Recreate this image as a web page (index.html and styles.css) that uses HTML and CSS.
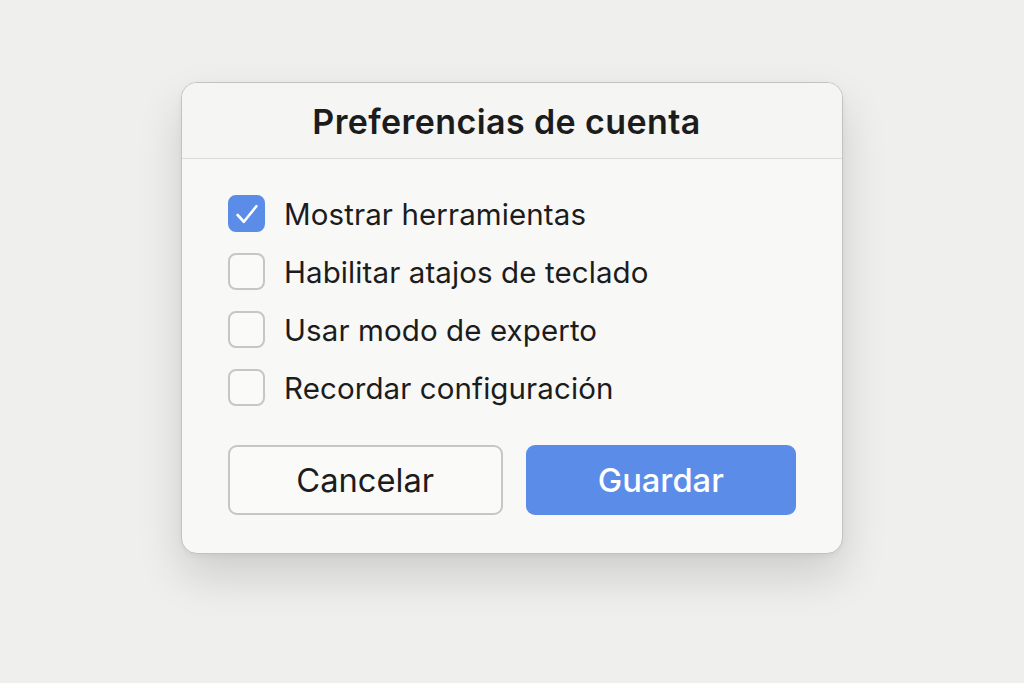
FILE: index.html
```html
<!DOCTYPE html>
<html lang="es">
<head>
    <meta charset="UTF-8">
    <meta name="viewport" content="width=device-width, initial-scale=1.0">
    <title>Preferencias de cuenta</title>
    <link rel="stylesheet" href="styles.css">
</head>
<body>
    <div class="prefs-dialog">
        <div class="prefs-header">
            <h1 class="prefs-title">Preferencias de cuenta</h1>
        </div>
        <div class="prefs-body">
            <ul class="prefs-list">
                <li class="prefs-row">
                    <span class="check-box checked">
                        <svg viewBox="0 0 24 24" width="30" height="30"><path d="M4.5 12.8l5 5.4L19.5 5.8" fill="none" stroke="#fff" stroke-width="2.1" stroke-linecap="round" stroke-linejoin="round"/></svg>
                    </span>
                    <span class="prefs-label">Mostrar herramientas</span>
                </li>
                <li class="prefs-row">
                    <span class="check-box"></span>
                    <span class="prefs-label">Habilitar atajos de teclado</span>
                </li>
                <li class="prefs-row">
                    <span class="check-box"></span>
                    <span class="prefs-label">Usar modo de experto</span>
                </li>
                <li class="prefs-row">
                    <span class="check-box"></span>
                    <span class="prefs-label">Recordar configuración</span>
                </li>
            </ul>
            <div class="prefs-actions">
                <button class="btn btn-cancel">Cancelar</button>
                <button class="btn btn-save">Guardar</button>
            </div>
        </div>
    </div>
</body>
</html>
```

FILE: styles.css
```css
:root {
    --page-bg: #efefed;
    --dialog-bg: #f8f8f7;
    --line-color: #dadad8;
    --box-border: #c6c6c4;
    --accent: #5b8de8;
    --text: #1c1c1c;
}

* {
    box-sizing: border-box;
    margin: 0;
    padding: 0;
}

body {
    min-height: 100vh;
    font-family: 'Inter', 'Noto Sans', sans-serif;
    background-color: var(--page-bg);
    display: flex;
    justify-content: center;
    align-items: flex-start;
    padding-top: 82px;
    color: var(--text);
}

.prefs-dialog {
    width: 662px;
    background-color: var(--dialog-bg);
    border: 1px solid #c2c2c0;
    border-radius: 16px;
    box-shadow: 0 22px 46px rgba(0, 0, 0, 0.14), 0 2px 6px rgba(0, 0, 0, 0.05);
    overflow: hidden;
}

.prefs-header {
    height: 76px;
    display: flex;
    align-items: center;
    justify-content: center;
    padding-right: 11px; /* заголовок чуть левее центра */
    border-bottom: 1px solid var(--line-color);
    background-color: #f5f5f4;
}

.prefs-title {
    font-size: 34px;
    font-weight: 600;
    letter-spacing: 0.4px;
    margin-top: 1px;
}

.prefs-body {
    padding: 36px 46px 38px;
}

.prefs-list {
    list-style: none;
    display: flex;
    flex-direction: column;
    gap: 21px;
}

.prefs-row {
    display: flex;
    align-items: center;
    gap: 19px;
    height: 37px;
}

.check-box {
    width: 37px;
    height: 37px;
    border: 2px solid var(--box-border);
    border-radius: 8px;
    background-color: #fafaf9;
    display: flex;
    align-items: center;
    justify-content: center;
    flex-shrink: 0;
}

.check-box.checked {
    background-color: var(--accent);
    border-color: var(--accent);
}

.prefs-label {
    font-size: 29.5px;
    font-weight: 400;
    letter-spacing: 0.1px;
}

.prefs-actions {
    display: flex;
    gap: 23px;
    margin-top: 39px;
}

.btn {
    flex: 1;
    height: 70px;
    border-radius: 9px;
    font-family: inherit;
    font-size: 32.7px;
    cursor: pointer;
}

.btn-cancel {
    background-color: #fafaf9;
    border: 2px solid var(--box-border);
    color: var(--text);
    font-weight: 400;
}

.btn-save {
    background-color: var(--accent);
    border: none;
    color: #fff;
    font-weight: 500;
}
```
